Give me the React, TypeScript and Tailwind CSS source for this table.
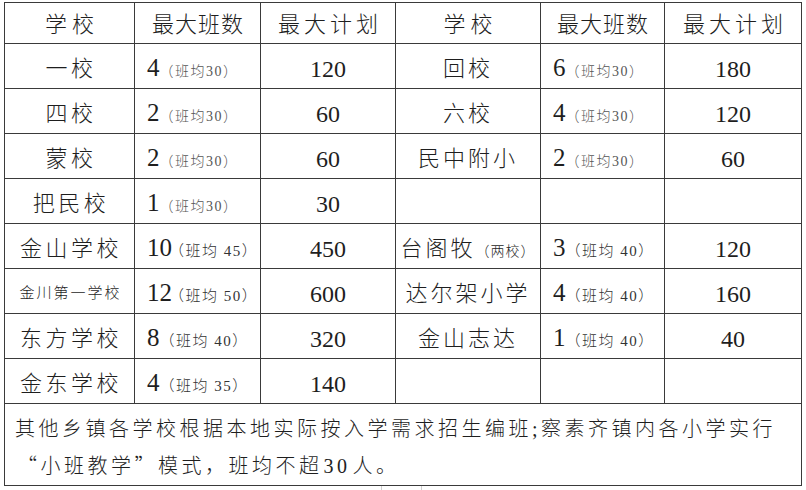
import React from 'react';

type Cls = { n: string; avg: string; small?: boolean };
type Row = {
  a: string;
  aSmall?: boolean;
  b: Cls | null;
  c: string;
  d: React.ReactNode;
  e: Cls | null;
  f: string;
};

const rows: Row[] = [
  { a: '一校', b: { n: '4', avg: '（班均30）', small: true }, c: '120', d: '回校', e: { n: '6', avg: '（班均30）', small: true }, f: '180' },
  { a: '四校', b: { n: '2', avg: '（班均30）', small: true }, c: '60', d: '六校', e: { n: '4', avg: '（班均30）', small: true }, f: '120' },
  { a: '蒙校', b: { n: '2', avg: '（班均30）', small: true }, c: '60', d: '民中附小', e: { n: '2', avg: '（班均30）', small: true }, f: '60' },
  { a: '把民校', b: { n: '1', avg: '（班均30）', small: true }, c: '30', d: '', e: null, f: '' },
  {
    a: '金山学校',
    b: { n: '10', avg: '（班均 45）' },
    c: '450',
    d: (
      <>
        台阁牧<span className="text-[14px] tracking-[1px]">（两校）</span>
      </>
    ),
    e: { n: '3', avg: '（班均 40）' },
    f: '120',
  },
  { a: '金川第一学校', aSmall: true, b: { n: '12', avg: '（班均 50）' }, c: '600', d: '达尔架小学', e: { n: '4', avg: '（班均 40）' }, f: '160' },
  { a: '东方学校', b: { n: '8', avg: '（班均 40）' }, c: '320', d: '金山志达', e: { n: '1', avg: '（班均 40）' }, f: '40' },
  { a: '金东学校', b: { n: '4', avg: '（班均 35）' }, c: '140', d: '', e: null, f: '' },
];

const td = 'border border-[#3a3a3a] p-0 align-middle';

function ClassCell({ v }: { v: Cls | null }) {
  if (!v) return <td className={td}></td>;
  const tight = v.n.length > 1;
  return (
    <td className={`${td} pl-[12px] pt-[5px] text-left whitespace-nowrap`}>
      <span className="text-[25px] leading-none">{v.n}</span>
      <span
        className={`${
          v.small
            ? 'text-[14px] leading-none text-[#555] tracking-[1.5px]'
            : 'text-[15px] leading-none text-[#333] tracking-[1.5px]'
        } ${tight ? '-ml-[3px]' : ''}`}
      >
        {v.avg}
      </span>
    </td>
  );
}

const cjk = "font-['Noto_Sans_CJK_SC',sans-serif]";

export default function App() {
  return (
    <div className="w-[806px] h-[490px] bg-white overflow-hidden text-[#1e1e1e] font-light font-['Liberation_Serif','Noto_Sans_CJK_SC',serif]">
      <table className="table-fixed border-collapse ml-[4px] mt-[2px] w-[797px]">
        <colgroup>
          <col className="w-[130px]" />
          <col className="w-[126px]" />
          <col className="w-[135px]" />
          <col className="w-[145px]" />
          <col className="w-[124px]" />
          <col className="w-[137px]" />
        </colgroup>
        <thead>
          <tr className="h-[41px]">
            {['学校', '最大班数', '最大计划', '学校', '最大班数', '最大计划'].map((h, i) => (
              <th
                key={i}
                className={`${td} pt-[4px] text-center font-light text-[22px] leading-none ${
                  i % 3 === 0 ? 'tracking-[5px] pl-[5px]' : i % 3 === 1 ? 'tracking-[1px] pl-[1px]' : 'tracking-[4px] pl-[4px]'
                }`}
              >
                {h}
              </th>
            ))}
          </tr>
        </thead>
        <tbody>
          {rows.map((r, i) => (
            <tr key={i} className="h-[45px]">
              <td
                className={`${td} pt-[5px] text-center leading-none whitespace-nowrap ${
                  r.aSmall ? 'text-[15px] tracking-[2px] pl-[2px]' : 'text-[22px] tracking-[3.5px] pl-[3px]'
                }`}
              >
                {r.a}
              </td>
              <ClassCell v={r.b} />
              <td className={`${td} pt-[5px] text-center text-[24px] leading-none`}>{r.c}</td>
              <td className={`${td} pt-[5px] text-center text-[22px] leading-none tracking-[3px] whitespace-nowrap`}>
                {r.d}
              </td>
              <ClassCell v={r.e} />
              <td className={`${td} pt-[5px] text-center text-[24px] leading-none`}>{r.f}</td>
            </tr>
          ))}
          <tr className="h-[82px]">
            <td colSpan={6} className={`${td} align-top pl-[10px] pt-[8px] text-left text-[20px] leading-[35px] tracking-[3.5px] whitespace-nowrap`}>
              其他乡镇各学校根据本地实际按入学需求招生编班;察素齐镇内各小学实行
              <br />
              <span className={`${cjk} ml-[2px]`}>“</span>小班教学
              <span className={cjk}>”</span>模式，班均不超<span className="ml-[1px]">30</span>
              <span className="ml-[2px]">人。</span>
            </td>
          </tr>
        </tbody>
      </table>
      <div className="ml-[381px] w-[41px] h-[6px] border-x border-[#cfcfcf]"></div>
    </div>
  );
}
